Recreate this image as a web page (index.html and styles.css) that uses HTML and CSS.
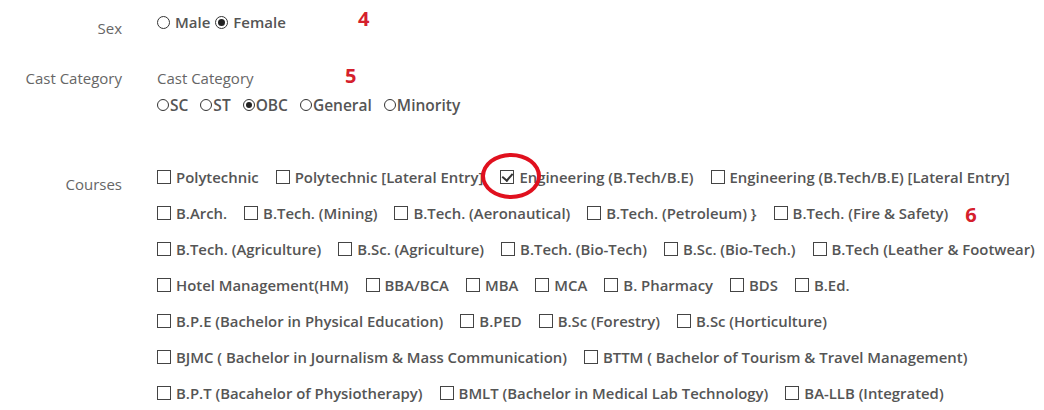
FILE: index.html
```html
<!DOCTYPE html>
<html lang="en">
<head>
    <meta charset="UTF-8">
    <title>Admission Form</title>
    <link rel="stylesheet" href="styles.css">
</head>
<body>
    <div class="form">
        <div class="form-row row-sex">
            <label class="row-label">Sex</label>
            <div class="row-field">
                <div class="radio-group">
                    <label class="radio"><input type="radio" name="sex"> Male</label>
                    <label class="radio"><input type="radio" name="sex" checked> Female</label>
                    <span class="marker marker-4">4</span>
                </div>
            </div>
        </div>

        <div class="form-row row-cast">
            <label class="row-label">Cast Category</label>
            <div class="row-field">
                <div class="field-title">Cast Category <span class="marker marker-5">5</span></div>
                <div class="radio-group tight">
                    <label class="radio small"><input type="radio" name="cast">SC</label>
                    <label class="radio small"><input type="radio" name="cast">ST</label>
                    <label class="radio small"><input type="radio" name="cast" checked>OBC</label>
                    <label class="radio small"><input type="radio" name="cast">General</label>
                    <label class="radio small"><input type="radio" name="cast">Minority</label>
                </div>
            </div>
        </div>

        <div class="form-row row-courses">
            <label class="row-label">Courses</label>
            <div class="row-field courses">
                <div class="course-line">
                    <label class="check"><input type="checkbox"> Polytechnic</label>
                    <label class="check"><input type="checkbox"> Polytechnic [Lateral Entry]</label>
                    <label class="check highlighted"><input type="checkbox" checked> Engineering (B.Tech/B.E)</label>
                    <label class="check"><input type="checkbox"> Engineering (B.Tech/B.E) [Lateral Entry]</label>
                </div>
                <div class="course-line">
                    <label class="check"><input type="checkbox"> B.Arch.</label>
                    <label class="check"><input type="checkbox"> B.Tech. (Mining)</label>
                    <label class="check"><input type="checkbox"> B.Tech. (Aeronautical)</label>
                    <label class="check"><input type="checkbox"> B.Tech. (Petroleum) }</label>
                    <label class="check"><input type="checkbox"> B.Tech. (Fire &amp; Safety)</label>
                    <span class="marker marker-6">6</span>
                </div>
                <div class="course-line">
                    <label class="check"><input type="checkbox"> B.Tech. (Agriculture)</label>
                    <label class="check"><input type="checkbox"> B.Sc. (Agriculture)</label>
                    <label class="check"><input type="checkbox"> B.Tech. (Bio-Tech)</label>
                    <label class="check"><input type="checkbox"> B.Sc. (Bio-Tech.)</label>
                    <label class="check"><input type="checkbox"> B.Tech (Leather &amp; Footwear)</label>
                </div>
                <div class="course-line">
                    <label class="check"><input type="checkbox"> Hotel Management(HM)</label>
                    <label class="check"><input type="checkbox"> BBA/BCA</label>
                    <label class="check"><input type="checkbox"> MBA</label>
                    <label class="check"><input type="checkbox"> MCA</label>
                    <label class="check"><input type="checkbox"> B. Pharmacy</label>
                    <label class="check"><input type="checkbox"> BDS</label>
                    <label class="check"><input type="checkbox"> B.Ed.</label>
                </div>
                <div class="course-line">
                    <label class="check"><input type="checkbox"> B.P.E (Bachelor in Physical Education)</label>
                    <label class="check"><input type="checkbox"> B.PED</label>
                    <label class="check"><input type="checkbox"> B.Sc (Forestry)</label>
                    <label class="check"><input type="checkbox"> B.Sc (Horticulture)</label>
                </div>
                <div class="course-line">
                    <label class="check"><input type="checkbox"> BJMC ( Bachelor in Journalism &amp; Mass Communication)</label>
                    <label class="check"><input type="checkbox"> BTTM ( Bachelor of Tourism &amp; Travel Management)</label>
                </div>
                <div class="course-line">
                    <label class="check"><input type="checkbox"> B.P.T (Bacahelor of Physiotherapy)</label>
                    <label class="check"><input type="checkbox"> BMLT (Bachelor in Medical Lab Technology)</label>
                    <label class="check"><input type="checkbox"> BA-LLB (Integrated)</label>
                </div>
            </div>
        </div>
    </div>
</body>
</html>
```

FILE: styles.css
```css
body {
    margin: 0;
    background: #fff;
    font-family: "Open Sans", Arial, sans-serif;
    color: #555;
}
.form {
    padding-top: 4px;
}
.form-row {
    display: grid;
    grid-template-columns: 122px 1fr;
    column-gap: 35px;
}
.row-label {
    text-align: right;
    font-size: 15px;
    color: #666;
}
.row-sex .row-label {
    padding-top: 14px;
}
.row-cast {
    margin-top: 14px;
}
.row-cast .row-label {
    padding-top: 14px;
}
.row-courses {
    margin-top: 30px;
}
.row-courses .row-label {
    padding-top: 26px;
}

.radio-group {
    display: flex;
    align-items: center;
    font-size: 15px;
    font-weight: 600;
    height: 36px;
    position: relative;
}
.radio {
    display: flex;
    align-items: center;
    margin-right: 5px;
}
.radio input,
.check input {
    appearance: none;
    -webkit-appearance: none;
    margin: 0;
    position: relative;
    flex: none;
}
.radio input {
    width: 13px;
    height: 13px;
    border: 1px solid #333;
    border-radius: 50%;
    background: #fff;
    margin-right: 5px;
}
.radio input:checked::after {
    content: "";
    position: absolute;
    left: 2px;
    top: 2px;
    width: 7px;
    height: 7px;
    border-radius: 50%;
    background: #222;
}
.radio-group.tight {
    height: 26px;
    margin-top: 4px;
    font-size: 15.5px;
}
.radio.small {
    margin-right: 12px;
}
.radio.small input {
    width: 12px;
    height: 12px;
    margin-right: 1px;
}
.radio.small input:checked::after {
    width: 6px;
    height: 6px;
}

.field-title {
    font-size: 15px;
    color: #666;
    padding-top: 14px;
    position: relative;
}

.marker {
    color: #d5202c;
    font-weight: 700;
    font-size: 20px;
    font-family: "Open Sans", Arial, sans-serif;
}
.marker-4 {
    position: absolute;
    left: 201px;
    top: 1px;
}
.marker-5 {
    position: absolute;
    left: 188px;
    top: 8px;
}
.marker-6 {
    margin-left: 0;
    margin-top: 2px;
}

.courses {
    padding-top: 11px;
}
.course-line {
    display: flex;
    align-items: center;
    height: 36px;
    font-size: 14.9px;
    font-weight: 600;
    white-space: nowrap;
}
.check {
    display: flex;
    align-items: center;
    margin-right: 17px;
    position: relative;
}
.check input {
    width: 14px;
    height: 14px;
    border: 1px solid #444;
    background: #fff;
    margin-right: 5px;
}
.check input:checked::after {
    content: "";
    position: absolute;
    left: 3px;
    top: 0px;
    width: 5px;
    height: 8px;
    border: solid #333;
    border-width: 0 2px 2px 0;
    transform: rotate(40deg);
}
.highlighted::before {
    content: "";
    position: absolute;
    left: -19px;
    top: -14px;
    width: 52px;
    height: 38px;
    border: 4px solid #e0101e;
    border-radius: 50%;
    z-index: 1;
}
```
